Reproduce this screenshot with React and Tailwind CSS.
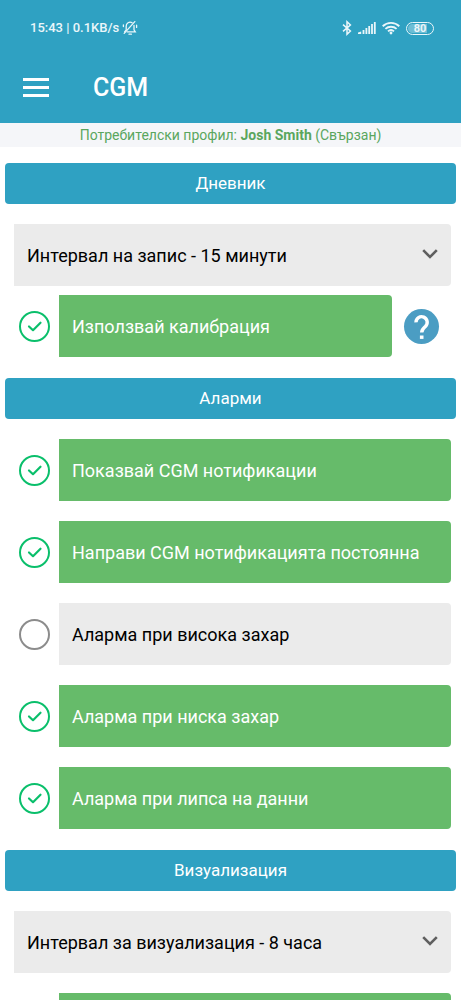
import React from 'react';

function MutedBell() {
  return (
    <svg viewBox="0 0 16 16" className="h-4 w-4" fill="none" stroke="currentColor" strokeWidth="1.3" strokeLinecap="round" aria-hidden="true">
      <path d="M4.2 10.2V6.2A3.9 3.9 0 0 1 10 2.6M12 5.5v4.3l1.3 2.1H5.2M2.6 12l1.2-1.6" />
      <path d="M12.8 1.6 2.2 13.4M7 14.2h2.4M1.4 5v1.6M14.6 5.2v2.2" />
    </svg>
  );
}

function Bluetooth() {
  return (
    <svg viewBox="0 0 10 16" className="h-4 w-[10px]" fill="none" stroke="currentColor" strokeWidth="1.5" aria-hidden="true">
      <path d="M1 4.6 8.4 11 5 14.2V1.8L8.4 5 1 11.4" />
    </svg>
  );
}

function Signal() {
  return (
    <svg viewBox="0 0 18 14" className="h-[14px] w-[18px]" fill="currentColor" aria-hidden="true">
      <path d="M0 13v-1.4L3.2 10.4V13zM4.6 9h1.8v4H4.6zM7.5 7h1.8v6H7.5zM10.3 5h1.8v8h-1.8zM13.1 3h1.8v10h-1.8zM15.9 1h1.8v12h-1.8z" />
    </svg>
  );
}

function Wifi() {
  return (
    <svg viewBox="0 0 18 14" className="h-[14px] w-[18px]" fill="none" stroke="currentColor" strokeWidth="1.9" aria-hidden="true">
      <path d="M.7 5.2a12 12 0 0 1 16.6 0M3.4 7.9a8.2 8.2 0 0 1 11.2 0M6 10.4a4.5 4.5 0 0 1 6 0" />
      <circle cx="9" cy="12" r="1.4" fill="currentColor" stroke="none" />
    </svg>
  );
}

function Battery() {
  return (
    <span className="flex h-[13px] w-7 items-center rounded-full border border-current p-px">
      <span className="flex h-full w-full items-center justify-center rounded-full bg-gradient-to-r from-white/30 from-80% to-transparent to-80% text-[11px] leading-none font-bold">
        80
      </span>
    </span>
  );
}

function StatusBar() {
  return (
    <div className="flex h-14 items-center justify-between pr-[27px] pl-[30px] text-[13px] font-medium text-[#eaf6fa]">
      <div className="flex items-center gap-[3px]">
        <span>15:43 | 0.1KB/s</span>
        <MutedBell />
      </div>
      <div className="flex items-center gap-[6px]">
        <Bluetooth />
        <Signal />
        <Wifi />
        <Battery />
      </div>
    </div>
  );
}

function SectionTitle({ children }) {
  return (
    <h2 className="mx-[5px] mb-5 flex h-[41px] items-center justify-center rounded bg-[#2fa1c2] text-[17px] text-white">
      {children}
    </h2>
  );
}

function IntervalSelect({ label, options }) {
  return (
    <div className="relative mr-[10px] ml-[14px]">
      <select
        aria-label={label}
        className="block h-[62px] w-full appearance-none rounded-r bg-[#ebebeb] pr-12 pl-[13px] text-[18px] text-black outline-none"
      >
        {options.map((option) => (
          <option key={option}>{option}</option>
        ))}
      </select>
      <svg viewBox="0 0 16 10" className="pointer-events-none absolute top-[25px] right-[13px] h-[10px] w-4" fill="none" stroke="#5f5f5f" strokeWidth="2.6" aria-hidden="true">
        <path d="M1.2 1.2 8 8l6.8-6.8" />
      </svg>
    </div>
  );
}

function ToggleRow({ id, label, ariaLabel, checked = false, help = false }) {
  return (
    <div className="group flex items-center pr-[10px] pl-[19px]">
      <span className="relative mr-[9px] h-[31px] w-[31px] shrink-0">
        <input
          id={id}
          type="checkbox"
          aria-label={ariaLabel}
          defaultChecked={checked}
          className="block h-full w-full appearance-none rounded-full border-2 border-[#8c8c8c] checked:border-[#0abf6b]"
        />
        <svg viewBox="0 0 31 31" className="pointer-events-none absolute inset-0 hidden group-has-checked:block" fill="none" stroke="#0abf6b" strokeWidth="2.2" strokeLinecap="round" strokeLinejoin="round" aria-hidden="true">
          <path d="m10 15.5 4 3.7 7.5-7.5" />
        </svg>
      </span>
      <label
        htmlFor={id}
        className="flex h-[62px] flex-1 items-center rounded-r bg-[#ebebeb] pl-[13px] text-[18px] text-black group-has-checked:bg-[#66bb6a] group-has-checked:text-white"
      >
        {label}
      </label>
      {help && (
        <button type="button" aria-label="Помощ" className="mr-3 ml-3 h-[35px] w-[35px] shrink-0 rounded-full bg-[#4b9dc3]">
          <svg viewBox="0 0 35 35" fill="none" stroke="white" strokeWidth="3.4" aria-hidden="true">
            <path d="M12 13.4a5.6 5.6 0 1 1 9.4 4c-2.2 2-3.7 3-3.7 6.2" />
            <path d="M15.9 28.2h3.6" />
          </svg>
        </button>
      )}
    </div>
  );
}

export default function App() {
  return (
    <div className="h-screen overflow-hidden bg-white font-['Roboto',sans-serif]">
      <header className="bg-[#2fa1c2] text-white">
        <StatusBar />
        <div className="flex h-[67px] items-center pb-1 pl-[23px]">
          <button type="button" aria-label="Меню" className="mr-11 flex w-[26px] flex-col gap-[5px]">
            <span className="h-[3px] bg-white" />
            <span className="h-[3px] bg-white" />
            <span className="h-[3px] bg-white" />
          </button>
          <h1 className="text-[25px] leading-8 font-medium">CGM</h1>
        </div>
      </header>
      <p className="flex h-6 items-center justify-center bg-[#f5f6f9] text-[14px] text-[#5aa65e]">
        <span>
          Потребителски профил: <b>Josh Smith</b> (Свързан)
        </span>
      </p>
      <main className="flex flex-col gap-[21px] pt-4">
        <section>
          <SectionTitle>Дневник</SectionTitle>
          <div className="flex flex-col gap-[9px]">
            <IntervalSelect label="Интервал на запис" options={['Интервал на запис - 15 минути']} />
            <ToggleRow id="calibration" label="Използвай калибрация" checked help />
          </div>
        </section>
        <section>
          <SectionTitle>Аларми</SectionTitle>
          <div className="flex flex-col gap-5">
            <ToggleRow id="notifications" label="Показвай CGM нотификации" checked />
            <ToggleRow id="persistent" label="Направи CGM нотификацията постоянна" checked />
            <ToggleRow id="high" label="Аларма при висока захар" />
            <ToggleRow id="low" label="Аларма при ниска захар" checked />
            <ToggleRow id="missing" label="Аларма при липса на данни" checked />
          </div>
        </section>
        <section>
          <SectionTitle>Визуализация</SectionTitle>
          <div className="flex flex-col gap-5">
            <IntervalSelect label="Интервал за визуализация" options={['Интервал за визуализация - 8 часа']} />
            <ToggleRow id="chart" ariaLabel="Графика" checked />
          </div>
        </section>
      </main>
    </div>
  );
}
